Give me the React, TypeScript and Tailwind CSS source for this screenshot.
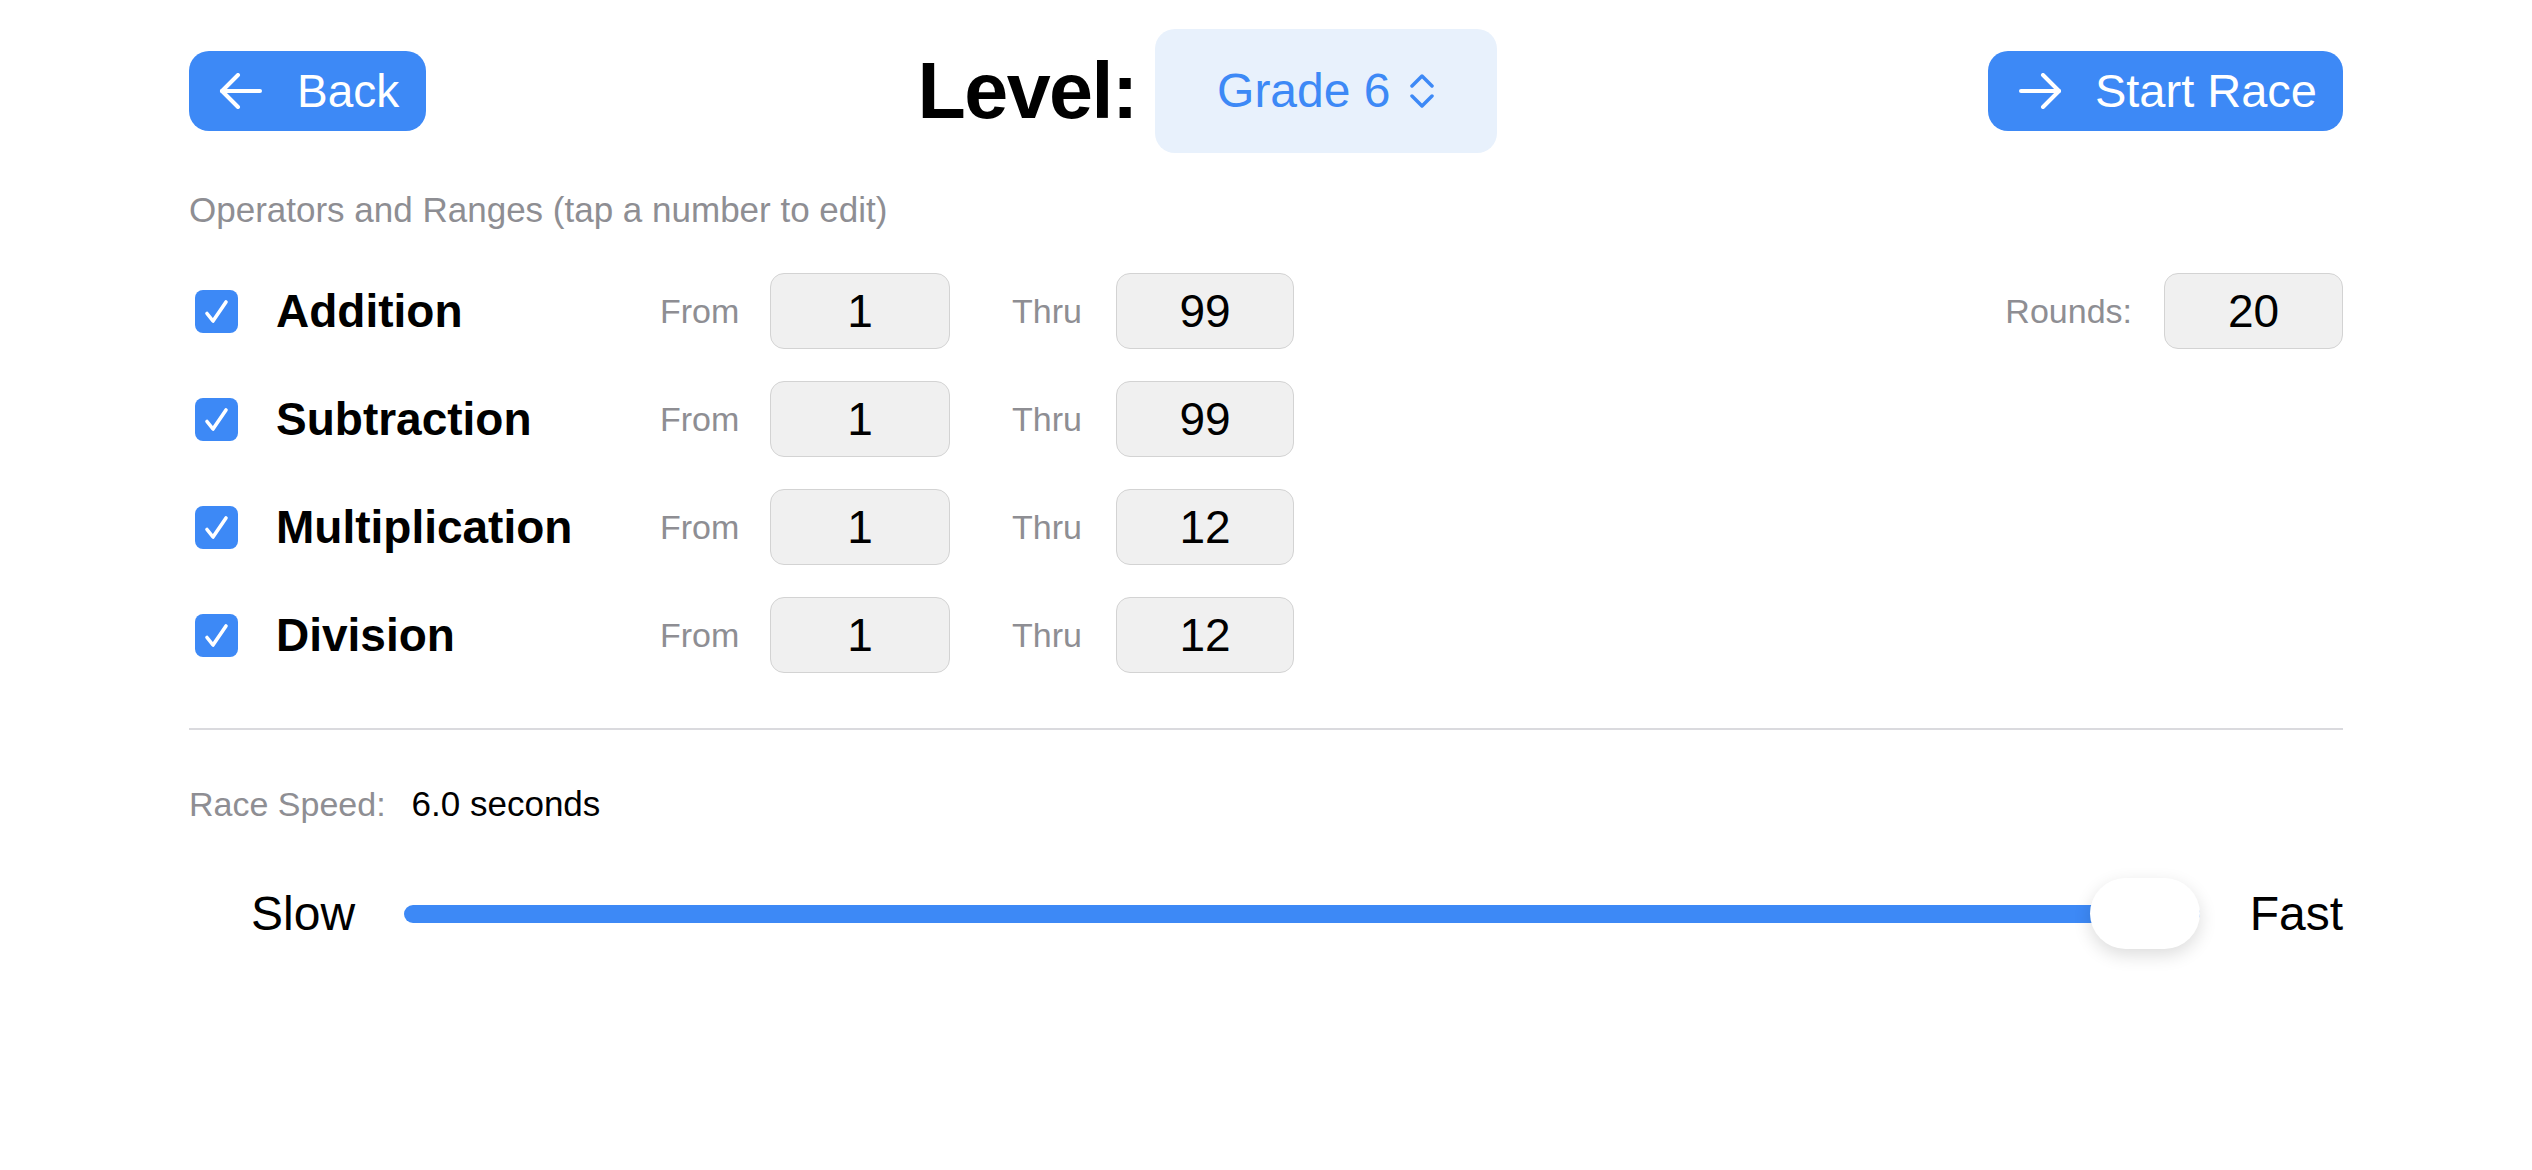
import React, { useState } from "react";

const BLUE = "#3d89f6";

const ArrowIcon = ({ dir }: { dir: "left" | "right" }) => (
    <svg
        width="44"
        height="36"
        viewBox="0 0 44 36"
        fill="none"
        stroke="white"
        strokeWidth="4"
        strokeLinecap="round"
        strokeLinejoin="round"
        className={dir === "right" ? "rotate-180" : ""}
    >
        <path d="M41 18H3" />
        <path d="M19 2L3 18l16 16" />
    </svg>
);

const Checkbox = ({ checked, onClick }: { checked: boolean; onClick: () => void }) => (
    <button
        onClick={onClick}
        className={`flex h-[43px] w-[43px] items-center justify-center rounded-[8px] ${
            checked ? "bg-[#3d89f6]" : "border-2 border-[#c7c7cc] bg-white"
        }`}
    >
        {checked && (
            <svg width="43" height="43" viewBox="0 0 43 43" fill="none" stroke="white" strokeWidth="3.6" strokeLinecap="round" strokeLinejoin="round">
                <path d="M12 23.5l6 7.5L31 12" />
            </svg>
        )}
    </button>
);

const NumBox = ({ value, w = "w-[180px]" }: { value: number; w?: string }) => (
    <div
        className={`flex h-[76px] ${w} items-center justify-center rounded-[14px] border-[1.5px] border-[#d3d3d3] bg-[#f0f0f0] text-[46px] text-black`}
    >
        {value}
    </div>
);

const operators = [
    { name: "Addition", from: 1, thru: 99 },
    { name: "Subtraction", from: 1, thru: 99 },
    { name: "Multiplication", from: 1, thru: 12 },
    { name: "Division", from: 1, thru: 12 },
];

export default function App() {
    const [enabled, setEnabled] = useState([true, true, true, true]);

    return (
        <div
            className="h-[1170px] w-full bg-white px-[189px] pt-[29px]"
            style={{ fontFamily: '"Liberation Sans", Arial, sans-serif' }}
        >
            {/* header */}
            <div className="flex items-center justify-between">
                <button className="flex h-[80px] items-center gap-[34px] rounded-[20px] bg-[#3d89f6] pl-[30px] pr-[27px] text-[46px] text-white">
                    <ArrowIcon dir="left" />
                    <span>Back</span>
                </button>
                <div className="flex items-center gap-[18px]">
                    <span className="text-[79px] font-bold tracking-[-1.5px] text-black">Level:</span>
                    <button className="flex h-[124px] w-[342px] items-center justify-center gap-[20px] rounded-[20px] bg-[#e8f1fc] text-[48px] text-[#3d89f6]">
                        <span>Grade 6</span>
                        <svg width="24" height="36" viewBox="0 0 24 36" fill="none" stroke={BLUE} strokeWidth="3.5" strokeLinecap="round" strokeLinejoin="round">
                            <path d="M2 13L12 3l10 10" />
                            <path d="M2 23l10 10 10-10" />
                        </svg>
                    </button>
                </div>
                <button className="flex h-[80px] items-center gap-[33px] rounded-[20px] bg-[#3d89f6] pl-[30px] pr-[26px] text-[47px] text-white">
                    <ArrowIcon dir="right" />
                    <span>Start Race</span>
                </button>
            </div>

            <p className="mt-[37px] text-[35px] leading-[40px] text-[#8e8e93]">
                Operators and Ranges (tap a number to edit)
            </p>

            {/* operator rows */}
            <div className="mt-[43px] flex flex-col gap-[32px]">
                {operators.map((op, i) => (
                    <div key={op.name} className="flex h-[76px] items-center">
                        <div className="ml-[6px]">
                            <Checkbox
                                checked={enabled[i]}
                                onClick={() =>
                                    setEnabled(enabled.map((v, j) => (j === i ? !v : v)))
                                }
                            />
                        </div>
                        <span className="ml-[38px] w-[384px] text-[46px] font-bold text-black">
                            {op.name}
                        </span>
                        <span className="w-[110px] text-[34px] text-[#8e8e93]">From</span>
                        <NumBox value={op.from} />
                        <span className="ml-[62px] w-[104px] text-[34px] text-[#8e8e93]">Thru</span>
                        <NumBox value={op.thru} w="w-[178px]" />
                        {i === 0 && (
                            <div className="flex flex-1 items-center justify-end gap-[32px]">
                                <span className="text-[34px] text-[#8e8e93]">Rounds:</span>
                                <NumBox value={20} w="w-[179px]" />
                            </div>
                        )}
                    </div>
                ))}
            </div>

            <div className="mt-[55px] h-[2px] bg-[#dadade]" />

            <div className="mt-[54px] flex items-center gap-[26px] text-[34px] leading-[40px]">
                <span className="text-[#8e8e93]">Race Speed:</span>
                <span className="text-[35px] text-black">6.0 seconds</span>
            </div>

            {/* speed slider */}
            <div className="mt-[54px] flex h-[71px] items-center">
                <span className="ml-[62px] text-[48px] text-black">Slow</span>
                <div className="relative ml-[49px] flex h-[71px] flex-1 items-center">
                    <div className="h-[18px] w-full rounded-full bg-[#3d89f6]" />
                    <div className="absolute right-0 top-0 h-[71px] w-[110px] rounded-full bg-white shadow-[0_6px_18px_rgba(0,0,0,0.14)]" />
                </div>
                <span className="ml-[50px] text-[48px] text-black">Fast</span>
            </div>
        </div>
    );
}
